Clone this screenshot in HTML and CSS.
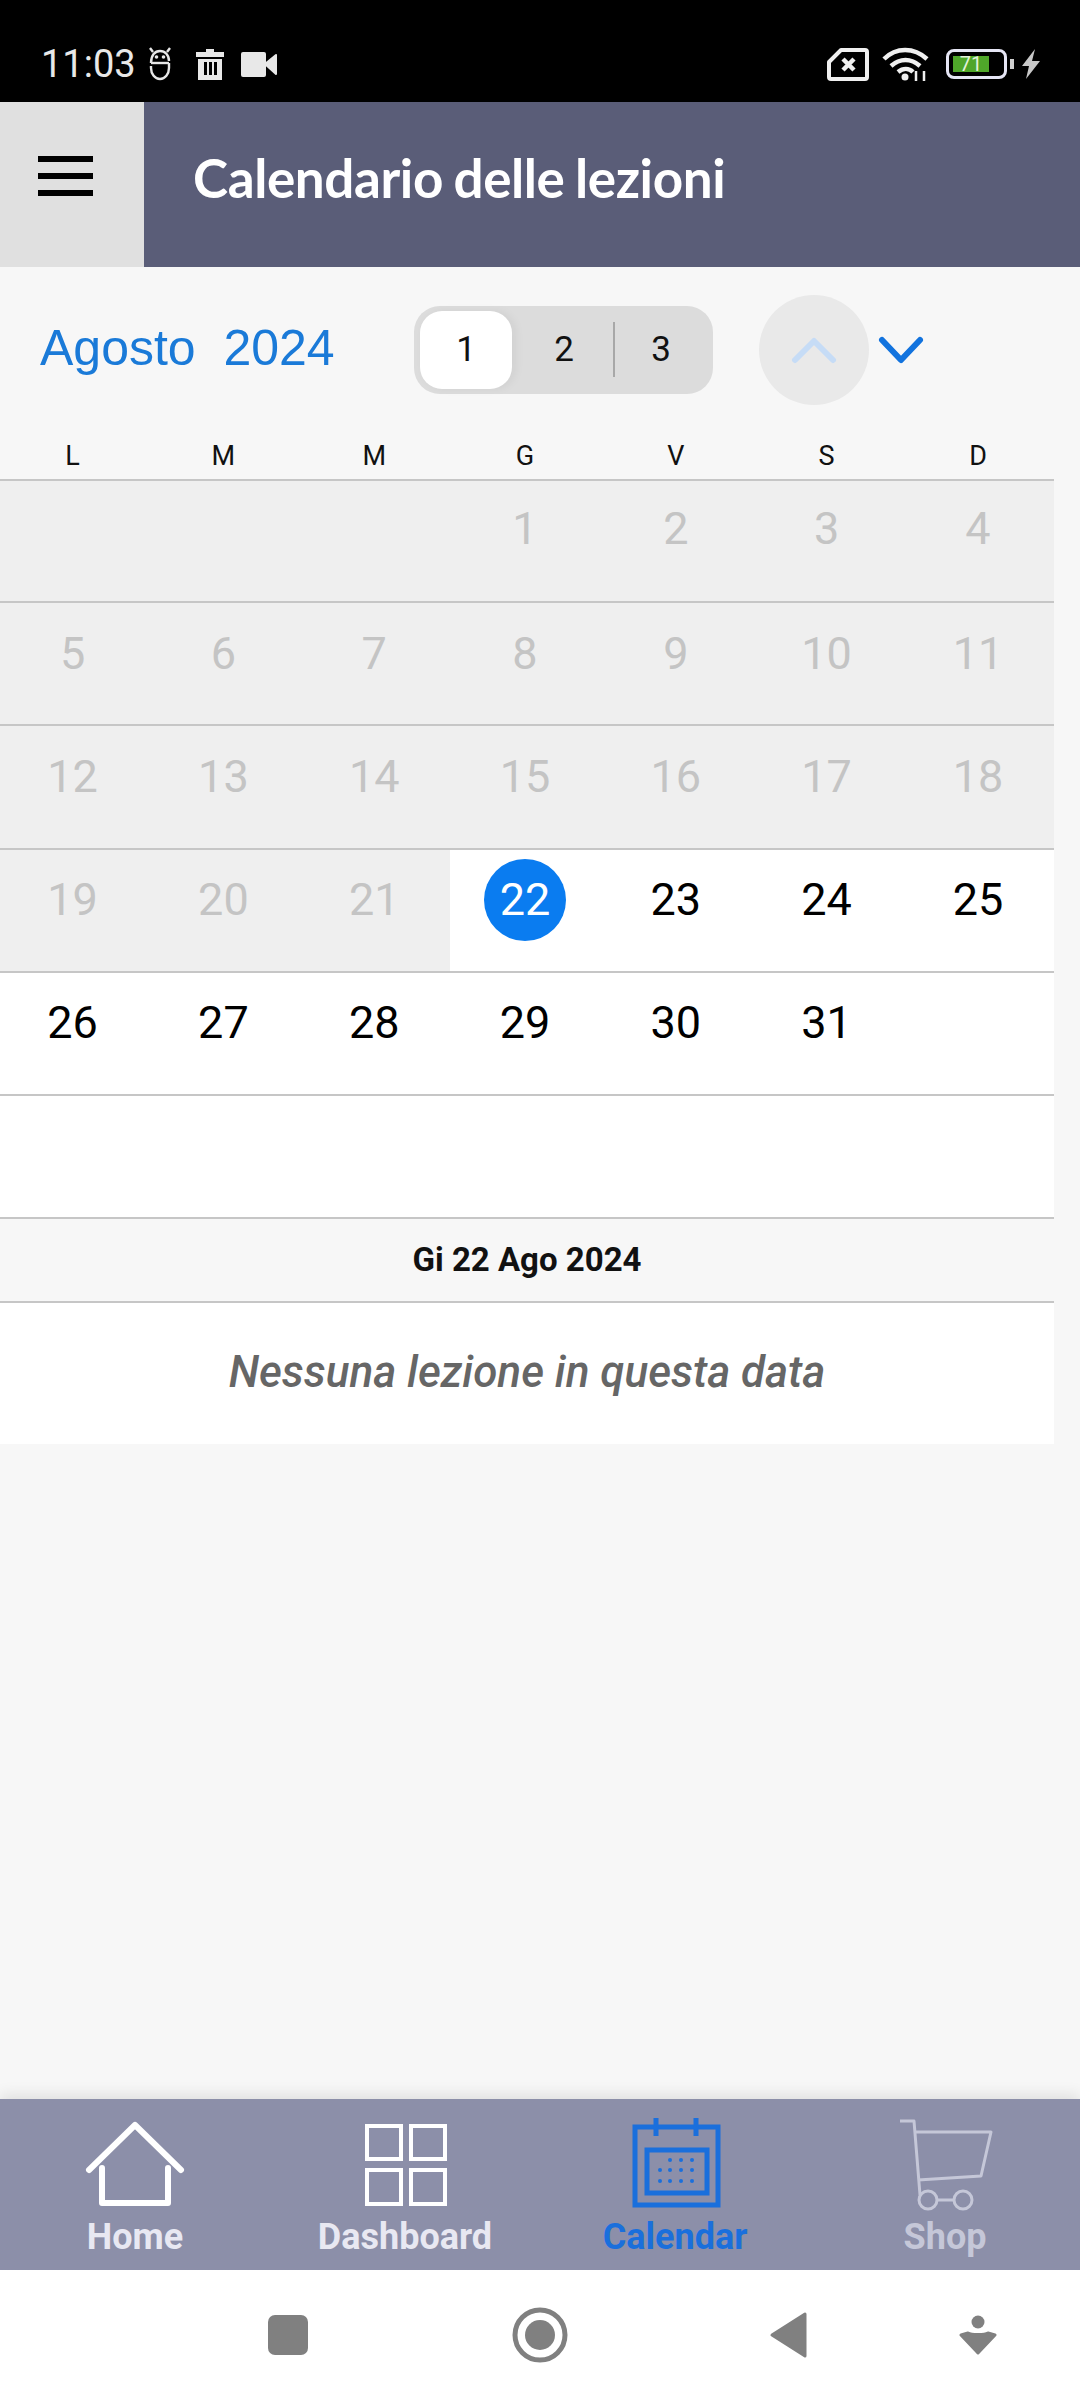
FILE: index.html
```html
<!DOCTYPE html>
<html>
<head>
  <title>Calendario delle lezioni</title>
  <link rel="stylesheet" href="styles.css">
</head>
<body>
  <div class="page">
    <!-- Status bar -->
    <div class="status-bar">
      <span class="status-time">11:03</span>
      <svg class="icon-robot" width="24" height="34" viewBox="0 0 24 34" fill="none" stroke="#e8e8e8" stroke-width="2.4">
        <path d="M2 1l3 4M22 1l-3 4"/>
        <path d="M3 16C3 8 7 4 12 4s9 4 9 10"/>
        <path d="M3 16h18"/>
        <path d="M21 16v5c0 6-4 11-9 11s-9-5-9-11v-2"/>
        <circle cx="8.5" cy="10" r="1.8" fill="#e8e8e8" stroke="none"/>
        <circle cx="15.5" cy="10" r="1.8" fill="#e8e8e8" stroke="none"/>
      </svg>
      <svg class="icon-trash" width="28" height="31" viewBox="0 0 28 31">
        <path fill="#e8e8e8" d="M10 0h8v3h10v5H0V3h10zM2 10h24v21H2zM8 13v13h3V13zM13 13v13h3V13zM18 13v13h3V13z" fill-rule="evenodd"/>
      </svg>
      <svg class="icon-camera" width="36" height="25" viewBox="0 0 36 25">
        <rect x="0" y="0" width="25" height="25" rx="2" fill="#e8e8e8"/>
        <path d="M24 12L35 3v19z" fill="#e8e8e8" stroke="#e8e8e8" stroke-width="2" stroke-linejoin="round"/>
      </svg>
      <div class="status-right">
        <svg width="42" height="33" viewBox="0 0 42 33" fill="none" stroke="#f0f0f0" stroke-width="4" stroke-linejoin="round">
          <path d="M14 2h24a2 2 0 0 1 2 2v25a2 2 0 0 1-2 2H4a2 2 0 0 1-2-2V14z"/>
          <path d="M16 11l11 11M27 11L16 22" stroke-width="4.5"/>
        </svg>
        <svg class="icon-wifi" width="48" height="34" viewBox="0 0 48 34" fill="none" stroke="#f0f0f0" stroke-width="4.5">
          <path d="M2 12C14 0 32 0 45 12"/>
          <path d="M9 19c9-8 20-8 29 0"/>
          <path d="M16 25c5-4 11-4 15 0"/>
          <circle cx="23" cy="30" r="3.5" fill="#f0f0f0" stroke="none"/>
          <path d="M34 24v10M42 24v10" stroke-width="2.5"/>
        </svg>
        <div class="battery">
          <div class="battery-body">
            <div class="battery-fill"><span>71</span></div>
          </div>
          <div class="battery-tip"></div>
        </div>
        <svg class="icon-bolt" width="20" height="30" viewBox="0 0 20 30">
          <path fill="#c8c8c8" d="M14 0L1 17h7L5 30l14-18h-8z"/>
        </svg>
      </div>
    </div>

    <!-- App bar -->
    <div class="app-bar">
      <div class="menu-button">
        <span></span>
        <span></span>
        <span></span>
      </div>
      <h1 class="app-title">Calendario delle lezioni</h1>
    </div>

    <!-- Month selector -->
    <div class="toolbar">
      <div class="month-label">Agosto&nbsp;&nbsp;2024</div>
      <div class="segment">
        <div class="segment-item active">1</div>
        <div class="segment-item">2</div>
        <div class="segment-divider"></div>
        <div class="segment-item last">3</div>
      </div>
      <div class="arrow-up">
        <svg width="46" height="28" viewBox="0 0 46 28" fill="none" stroke="#c6dcf6" stroke-width="6" stroke-linecap="round" stroke-linejoin="round">
          <path d="M4 24L23 5l19 19"/>
        </svg>
      </div>
      <svg class="arrow-down" width="46" height="28" viewBox="0 0 46 28" fill="none" stroke="#1273de" stroke-width="6" stroke-linecap="round" stroke-linejoin="round">
        <path d="M4 4l19 20L42 4"/>
      </svg>
    </div>

    <!-- Calendar -->
    <div class="weekdays">
      <div>L</div><div>M</div><div>M</div><div>G</div><div>V</div><div>S</div><div>D</div>
    </div>
    <div class="cal-row first">
      <div class="cell past"></div>
      <div class="cell past"></div>
      <div class="cell past"></div>
      <div class="cell past"><span class="day">1</span></div>
      <div class="cell past"><span class="day">2</span></div>
      <div class="cell past"><span class="day">3</span></div>
      <div class="cell past"><span class="day">4</span></div>
    </div>
    <div class="cal-row">
      <div class="cell past"><span class="day">5</span></div>
      <div class="cell past"><span class="day">6</span></div>
      <div class="cell past"><span class="day">7</span></div>
      <div class="cell past"><span class="day">8</span></div>
      <div class="cell past"><span class="day">9</span></div>
      <div class="cell past"><span class="day">10</span></div>
      <div class="cell past"><span class="day">11</span></div>
    </div>
    <div class="cal-row">
      <div class="cell past"><span class="day">12</span></div>
      <div class="cell past"><span class="day">13</span></div>
      <div class="cell past"><span class="day">14</span></div>
      <div class="cell past"><span class="day">15</span></div>
      <div class="cell past"><span class="day">16</span></div>
      <div class="cell past"><span class="day">17</span></div>
      <div class="cell past"><span class="day">18</span></div>
    </div>
    <div class="cal-row">
      <div class="cell past"><span class="day">19</span></div>
      <div class="cell past"><span class="day">20</span></div>
      <div class="cell past"><span class="day">21</span></div>
      <div class="cell"><span class="day today">22</span></div>
      <div class="cell"><span class="day">23</span></div>
      <div class="cell"><span class="day">24</span></div>
      <div class="cell"><span class="day">25</span></div>
    </div>
    <div class="cal-row">
      <div class="cell"><span class="day">26</span></div>
      <div class="cell"><span class="day">27</span></div>
      <div class="cell"><span class="day">28</span></div>
      <div class="cell"><span class="day">29</span></div>
      <div class="cell"><span class="day">30</span></div>
      <div class="cell"><span class="day">31</span></div>
      <div class="cell"></div>
    </div>
    <div class="cal-row"></div>

    <!-- Selected date -->
    <div class="date-bar">Gi 22 Ago 2024</div>
    <div class="no-lessons">Nessuna lezione in questa data</div>

    <div class="spacer"></div>

    <!-- Tab bar -->
    <div class="tab-bar">
      <div class="tab">
        <svg width="120" height="100" viewBox="0 0 120 100" fill="none" stroke="#fff" stroke-width="6" stroke-linecap="round" stroke-linejoin="round">
          <path d="M14 56L60 11l46 45"/>
          <path d="M27 54v35h66V54"/>
        </svg>
        <span>Home</span>
      </div>
      <div class="tab">
        <svg width="120" height="100" viewBox="0 0 120 100" fill="none" stroke="#fff" stroke-width="4">
          <rect x="22" y="12" width="34" height="33"/>
          <rect x="66" y="12" width="34" height="33"/>
          <rect x="22" y="56" width="34" height="34"/>
          <rect x="66" y="56" width="34" height="34"/>
        </svg>
        <span>Dashboard</span>
      </div>
      <div class="tab active">
        <svg width="120" height="100" viewBox="0 0 120 100" fill="none" stroke="#1a6fdc" stroke-width="5">
          <rect x="20" y="13" width="83" height="78"/>
          <path d="M41 4v18M81 4v18"/>
          <rect x="32" y="36" width="60" height="43"/>
          <g fill="#1a6fdc" stroke="none">
            <circle cx="55" cy="46" r="2"/><circle cx="66" cy="46" r="2"/><circle cx="77" cy="46" r="2"/>
            <circle cx="45" cy="56" r="2"/><circle cx="55" cy="56" r="2"/><circle cx="66" cy="56" r="2"/><circle cx="77" cy="56" r="2"/>
            <circle cx="45" cy="67" r="2"/><circle cx="55" cy="67" r="2"/><circle cx="66" cy="67" r="2"/><circle cx="77" cy="67" r="2"/>
          </g>
        </svg>
        <span>Calendar</span>
      </div>
      <div class="tab disabled">
        <svg width="120" height="100" viewBox="0 0 120 100" fill="none" stroke="#c5c7d8" stroke-width="3" stroke-linejoin="round">
          <path d="M15 7h14l6 74"/>
          <path d="M30 18h76l-10 44-63 4"/>
          <circle cx="43" cy="86" r="9"/>
          <circle cx="78" cy="86" r="9"/>
          <path d="M52 86h17"/>
        </svg>
        <span>Shop</span>
      </div>
    </div>

    <!-- System navigation -->
    <div class="system-nav">
      <div class="sys-square"></div>
      <svg class="sys-home" width="56" height="56" viewBox="0 0 56 56">
        <circle cx="28" cy="28" r="25" fill="none" stroke="#808080" stroke-width="5"/>
        <circle cx="28" cy="28" r="15" fill="#808080"/>
      </svg>
      <svg class="sys-back" width="38" height="48" viewBox="0 0 38 48">
        <path d="M36 3v42L3 24z" fill="#808080" stroke="#808080" stroke-width="3" stroke-linejoin="round"/>
      </svg>
      <svg class="sys-assist" width="38" height="40" viewBox="0 0 38 40">
        <circle cx="19" cy="7" r="6.5" fill="#808080"/>
        <path d="M2 20l7-2c3 2 17 2 20 0l7 2-17 18z" fill="#808080" stroke="#808080" stroke-width="3" stroke-linejoin="round"/>
      </svg>
    </div>
  </div>
</body>
</html>
```

FILE: styles.css
```css
/* Page frame */
body {
  margin: 0;
  font-family: 'Roboto', sans-serif;
  background-color: #f7f7f7;
}

.page {
  display: flex;
  flex-direction: column;
  width: 1080px;
  height: 2400px;
  overflow: hidden;
}

/* Status bar */
.status-bar {
  display: flex;
  align-items: center;
  height: 102px;
  padding: 26px 39px 0 41px;
  box-sizing: border-box;
  background-color: #000;
  color: #e8e8e8;
}

.status-time {
  font-size: 38px;
}

.icon-robot {
  margin-left: 12px;
}

.icon-trash {
  margin-left: 24px;
}

.icon-camera {
  margin-left: 17px;
}

.status-right {
  display: flex;
  align-items: center;
  margin-left: auto;
}

.icon-wifi {
  margin-left: 13px;
}

.battery {
  display: flex;
  align-items: center;
  margin-left: 16px;
}

.battery-body {
  width: 61px;
  height: 30px;
  padding: 4px;
  box-sizing: border-box;
  border: 3px solid #e6e6f5;
  border-radius: 8px;
}

.battery-fill {
  width: 36px;
  height: 100%;
  background-color: #4fa62a;
  text-align: center;
}

.battery-fill span {
  display: block;
  font-size: 20px;
  line-height: 16px;
  color: #e4f2da;
}

.battery-tip {
  width: 4px;
  height: 10px;
  margin-left: 3px;
  background-color: #d0d0d0;
}

.icon-bolt {
  margin-left: 7px;
}

/* App bar */
.app-bar {
  display: flex;
  align-items: center;
  height: 165px;
  background-color: #5a5d78;
}

.menu-button {
  display: flex;
  flex-direction: column;
  justify-content: center;
  gap: 11px;
  width: 144px;
  height: 100%;
  padding: 0 0 17px 38px;
  box-sizing: border-box;
  background-color: #e0e0e0;
}

.menu-button span {
  display: block;
  width: 55px;
  height: 6px;
  background-color: #000;
}

.app-title {
  margin: 0 0 15px 49px;
  font-family: 'Lato', sans-serif;
  font-size: 53px;
  font-weight: 700;
  letter-spacing: -0.4px;
  word-spacing: -2px;
  color: #fff;
}

/* Month selector */
.toolbar {
  display: flex;
  align-items: center;
  height: 165px;
  padding-left: 40px;
  box-sizing: border-box;
}

.month-label {
  width: 293px;
  padding-bottom: 4px;
  font-family: 'Liberation Sans', sans-serif;
  font-size: 50px;
  color: #1a7ad8;
  white-space: nowrap;
}

.segment {
  display: flex;
  align-items: center;
  width: 299px;
  height: 88px;
  margin-left: 81px;
  padding: 5px 0 5px 6px;
  box-sizing: border-box;
  background-color: #dcdcdc;
  border-radius: 26px;
  font-size: 35px;
  color: #111;
}

.segment-item {
  display: flex;
  align-items: center;
  justify-content: center;
  width: 98px;
  height: 100%;
}

.segment-item.active {
  width: 92px;
  margin-right: 3px;
  background-color: #fff;
  border-radius: 22px;
  box-shadow: 4px 0 10px rgba(0, 0, 0, 0.05);
}

.segment-item.last {
  width: 92px;
}

.segment-divider {
  width: 2px;
  height: 55px;
  background-color: #a8a8a8;
}

.arrow-up {
  display: flex;
  align-items: center;
  justify-content: center;
  width: 110px;
  height: 110px;
  margin-left: 46px;
  background-color: #e9e9e9;
  border-radius: 50%;
}

.arrow-down {
  margin-left: 9px;
}

/* Calendar */
.weekdays,
.cal-row {
  display: grid;
  grid-template-columns: repeat(6, 150.8px) 1fr;
  width: 1056.8px;
  margin-left: -2.8px;
}

.weekdays {
  align-items: center;
  height: 47px;
  font-size: 27px;
  color: #111;
  text-align: center;
}

.cal-row {
  height: 123.3px;
  box-sizing: border-box;
  border-top: 2px solid #c6c6c6;
  background-color: #fff;
}

.cal-row.first {
  height: 122px;
}

.cal-row.first .cell {
  padding-top: 6px;
}

.cell {
  display: flex;
  justify-content: center;
  padding-top: 9px;
}

.cell.past {
  background-color: #efefef;
  color: #c4c4c4;
}

.day {
  display: flex;
  align-items: center;
  justify-content: center;
  width: 82px;
  height: 82px;
  font-size: 45px;
}

.day.today {
  background-color: #0a7cf0;
  border-radius: 50%;
  color: #fff;
}

.date-bar {
  display: flex;
  align-items: center;
  justify-content: center;
  width: 1054px;
  height: 86px;
  padding-bottom: 2px;
  box-sizing: border-box;
  border-top: 2px solid #c6c6c6;
  border-bottom: 2px solid #c6c6c6;
  font-size: 33px;
  font-weight: 700;
  color: #111;
}

.no-lessons {
  display: flex;
  align-items: center;
  justify-content: center;
  width: 1054px;
  height: 141px;
  padding-bottom: 4px;
  box-sizing: border-box;
  background-color: #fff;
  font-size: 44px;
  font-style: italic;
  font-weight: 500;
  color: #666;
}

.spacer {
  flex: 1;
}

/* Tab bar */
.tab-bar {
  display: grid;
  grid-template-columns: repeat(4, 270px);
  height: 171px;
  padding-top: 15px;
  box-sizing: border-box;
  background-color: #8c8fa9;
  box-shadow: 0 -4px 14px rgba(0, 0, 0, 0.1);
}

.tab {
  display: flex;
  flex-direction: column;
  align-items: center;
  font-size: 36px;
  font-weight: 700;
  color: #e8e8f2;
}

.tab svg {
  display: block;
}

.tab span {
  margin-top: 2px;
}

.tab.active {
  color: #1a6fdc;
}

.tab.disabled {
  color: #c5c7d8;
}

/* System navigation */
.system-nav {
  display: flex;
  align-items: center;
  height: 130px;
  padding-left: 268px;
  box-sizing: border-box;
  background-color: #fff;
}

.sys-square {
  width: 40px;
  height: 40px;
  background-color: #808080;
  border-radius: 7px;
}

.sys-home {
  margin-left: 204px;
}

.sys-back {
  margin-left: 201px;
}

.sys-assist {
  margin-left: 152px;
}
```
